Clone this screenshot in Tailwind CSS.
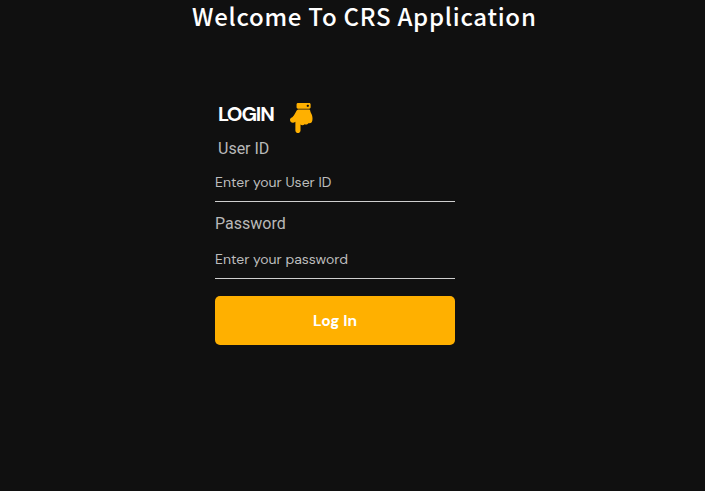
<!DOCTYPE html>
<html lang="en">
<head>
<meta charset="utf-8">
<title>CRS Application</title>
<script src="https://cdn.jsdelivr.net/npm/@tailwindcss/browser@4"></script>
</head>
<body class="bg-[#101010] min-h-screen overflow-hidden font-['DM_Sans',Inter,sans-serif]">
<h1 class="pl-[192px] h-[31px] leading-[31px] whitespace-nowrap text-[24px] font-medium text-white tracking-[0.75px] font-['Noto_Sans_CJK_SC',sans-serif]">Welcome To CRS Application</h1>
<form class="ml-[215px] mt-[72px] w-[240px] flex flex-col" onsubmit="return false">
  <div class="flex h-[30px] pl-[3px]">
    <h2 class="w-[72px] pt-[1px] text-[20px] leading-[20px] font-bold text-white tracking-[-1.1px]">LOGIN</h2>
    <svg class="h-[30px] w-[22.5px]" viewBox="0 0 384 512" fill="#ffb000"><path d="M91.826 467.2V317.966c-8.248 5.841-16.558 10.57-24.918 14.153C35.098 345.752-.014 322.222 0 288c.008-18.616 10.897-32.203 29.092-40 28.286-12.122 64.329-78.648 77.323-107.534 7.956-17.857 25.479-28.453 43.845-28.464h171.527c11.812 0 21.897 8.596 23.703 20.269 7.25 46.837 38.483 61.76 38.315 123.731-.007 2.724.195 13.254.195 16 0 50.654-22.122 81.574-71.263 72.6-9.297 18.597-39.486 30.738-62.315 16.45-21.177 24.645-53.896 22.639-70.944 6.299V467.2c0 24.15-20.201 44.8-43.826 44.8-23.283 0-43.826-21.35-43.826-44.8zM112 72V24c0-13.255 10.745-24 24-24h192c13.255 0 24 10.745 24 24v48c0 13.255-10.745 24-24 24H136c-13.255 0-24-10.745-24-24zm212-24c0-11.046-8.954-20-20-20s-20 8.954-20 20 8.954 20 20 20 20-8.954 20-20z"/></svg>
  </div>
  <label for="user" class="mt-[6px] pl-[3px] h-[20px] text-base leading-[20px] text-[#b9b9b9] font-[Roboto,sans-serif]">User ID</label>
  <input id="user" class="mt-[4px] h-[39px] pb-px border-b border-[#cfcfcf] bg-transparent text-[14px] text-white placeholder:text-[#bdbdbd] outline-none" placeholder="Enter your User ID">
  <label for="pass" class="mt-[12px] h-[20px] text-base leading-[20px] text-[#b9b9b9] font-[Roboto,sans-serif]">Password</label>
  <input id="pass" type="password" class="mt-[6px] h-[39px] pb-px border-b border-[#cfcfcf] bg-transparent text-[14px] text-white placeholder:text-[#bdbdbd] outline-none" placeholder="Enter your password">
  <button class="mt-[17px] h-[49px] pt-[2px] rounded-[5px] bg-[#ffb000] text-[15.5px] font-bold text-white">Log In</button>
</form>
</body>
</html>
